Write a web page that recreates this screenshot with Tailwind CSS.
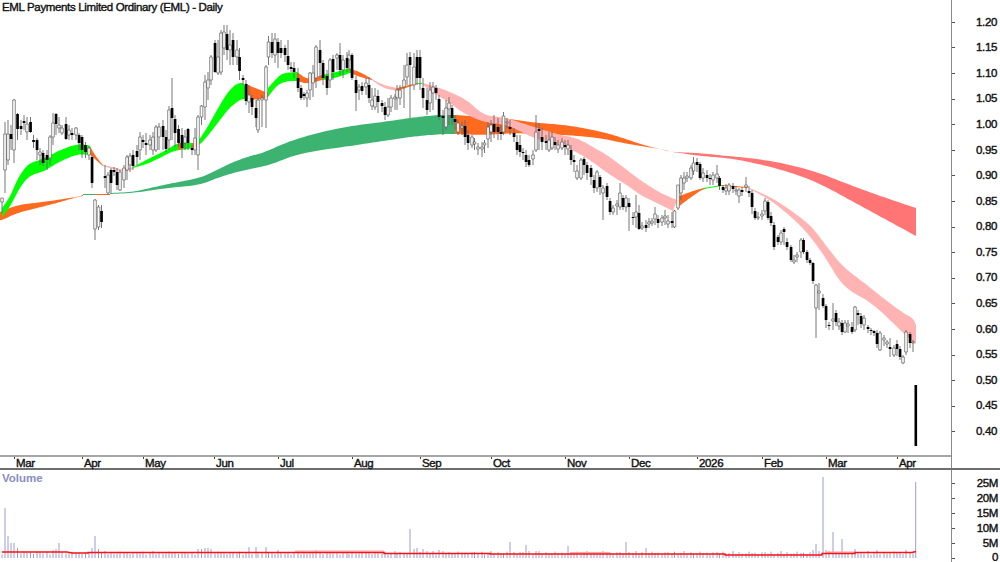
<!DOCTYPE html>
<html>
<head>
<meta charset="utf-8">
<script src="https://cdn.jsdelivr.net/npm/@tailwindcss/browser@4"></script>
</head>
<body class="w-[1000px] h-[562px] overflow-hidden bg-white text-[#111] font-['Liberation_Sans',Arial,sans-serif] text-[11.5px] tracking-[-0.35px] leading-none">
<div class="flex flex-col h-[562px]">
  <!-- price pane -->
  <div class="flex h-[455px]">
    <div class="relative w-[951px]">
      <svg id="main" class="block blur-[0.2px]" width="951" height="455" viewBox="0 0 951 455">
        <polygon class="band" fill="#ff6a1f" points="0,212 17,205 43,202 77,197 83,195 83,196 77,197 57,203 33,209 17,213 2,220 0,220"/>
        <polygon fill="#3cb371" points="83,194 95,194 95,195 83,195"/>
        <polygon fill="#ff6a1f" points="95,194 110,194 110,195 95,195"/>
        <polygon class="band" fill="#3cb371" points="110,193 133,192 150,188 173,183 200,178 217,170 233,162 250,156 263,153 287,142 317,133 350,126 383,122 417,117 437,115 455,115 455,134 443,134 417,136 383,141 350,146 300,153 270,165 250,169 233,173 217,178 200,185 167,188 133,193 110,194"/>
        <polygon class="band" fill="#ff6a1f" points="455,115 500,118 510,119 537,123 567,125 603,132 623,138 643,145 660,149 647,147 623,143 600,138 567,135 517,133 500,134 480,135 455,134"/>
        <polygon class="band" fill="#ff7575" points="660,149 670,152 700,153 727,156 750,158 783,163 817,172 850,185 883,197 916,208 916,236 883,218 850,200 817,182 783,170 750,162 727,158 700,156 673,152"/>

        <polygon class="band" fill="#00ff00" points="2,208 10,197 17,180 24,169 30,163 43,159 60,150 77,144 88,145 90,146 90,155 80,154 70,157 57,163 43,172 30,175 20,187 10,207 2,217"/>
        <polygon class="band" fill="#ff6a1f" points="90,146 92,150 97,158 103,165 103,166 97,161 92,156 90,155"/>
        <polygon class="band" fill="#ffb3b3" points="103,165 113,167 123,170 133,167 133,169 123,172 113,169 103,166"/>
        <polygon class="band" fill="#00ff00" points="133,167 150,158 167,150 177,143 190,143 197,143 207,128 217,110 227,93 237,83 245,83 248,98 240,100 230,107 220,120 210,133 200,145 190,149 177,150 167,154 150,163 133,168"/>
        <polygon fill="#ff6a1f" points="178,143 183,143 183,149 178,150"/>
        <polygon fill="#ff6a1f" points="192,143 197,143 197,146 192,149"/>
        <polygon class="band" fill="#ff6a1f" points="245,83 250,86 258,89 265,92 268,92 268,97 265,99 250,100 248,98"/>
        <polygon class="band" fill="#00ff00" points="268,88 277,78 283,73 297,72 297,81 287,81 277,85 268,97"/>
        <polygon class="band" fill="#ff6a1f" points="297,72 308,80 322,75 322,80 308,84 297,81"/>
        <polygon class="band" fill="#00ff00" points="322,75 332,73 350,68 350,73 332,79 322,80"/>
        <polygon class="band" fill="#ff6a1f" points="350,69 360,72 372,79 372,80 360,77 350,73"/>
        <polygon class="band" fill="#ffb3b3" points="372,79 383,85 397,88 397,91 383,88 372,80"/>
        <polygon fill="#ff6a1f" points="397,88 417,83 417,84 397,91"/>
        <polygon fill="#00ff00" points="417,83 422,83 422,84 417,84"/>
        <polygon class="band" fill="#ffb3b3" points="423,83 437,87 450,92 467,100 483,115 500,117 510,119 537,128 560,135 577,138 593,147 607,155 623,167 640,180 660,193 677,200 673,211 657,203 640,195 627,185 610,175 590,160 573,150 553,143 533,138 510,126 500,124 483,122 463,113 450,103 432,92 423,85"/>
        <polygon class="band" fill="#ff6a1f" points="677,197 690,192 703,188 707,188 700,191 687,200 677,208"/>
        <polygon fill="#00ff00" points="703,188 722,185 722,186 703,189"/>
        <polygon fill="#ff6a1f" points="722,185 748,187 748,188 722,186"/>
        <polygon class="band" fill="#ffb3b3" points="750,188 770,197 783,205 800,217 813,228 827,247 843,267 863,282 883,298 903,313 913,318 916,325 916,344 913,342 900,330 883,313 867,300 853,293 840,282 827,260 813,240 800,225 783,210 770,200 750,189"/>

        <path id="wicks" fill="none" stroke="#666" stroke-width="0.9"/>
        <path id="hollow" fill="#fff" stroke="#5c5c5c" stroke-width="0.7"/>
        <path id="solid" fill="#000"/>
        <rect x="914.5" y="385" width="2.6" height="61" fill="#000"/>
      </svg>
      <div class="absolute left-[2px] top-[2px] [-webkit-text-stroke:0.4px_#111]">EML Payments Limited Ordinary (EML) - Daily</div>
    </div>
    <div class="w-[49px] border-l border-[#8a8a8a] pt-[9.5px] [-webkit-text-stroke:0.4px_#111]">
      <div class="flex justify-between items-center h-[25.6px] pr-[3px]"><span class="w-[3px] h-px bg-[#555]"></span><span>1.20</span></div>
      <div class="flex justify-between items-center h-[25.6px] pr-[3px]"><span class="w-[3px] h-px bg-[#555]"></span><span>1.15</span></div>
      <div class="flex justify-between items-center h-[25.6px] pr-[3px]"><span class="w-[3px] h-px bg-[#555]"></span><span>1.10</span></div>
      <div class="flex justify-between items-center h-[25.6px] pr-[3px]"><span class="w-[3px] h-px bg-[#555]"></span><span>1.05</span></div>
      <div class="flex justify-between items-center h-[25.6px] pr-[3px]"><span class="w-[3px] h-px bg-[#555]"></span><span>1.00</span></div>
      <div class="flex justify-between items-center h-[25.6px] pr-[3px]"><span class="w-[3px] h-px bg-[#555]"></span><span>0.95</span></div>
      <div class="flex justify-between items-center h-[25.6px] pr-[3px]"><span class="w-[3px] h-px bg-[#555]"></span><span>0.90</span></div>
      <div class="flex justify-between items-center h-[25.6px] pr-[3px]"><span class="w-[3px] h-px bg-[#555]"></span><span>0.85</span></div>
      <div class="flex justify-between items-center h-[25.6px] pr-[3px]"><span class="w-[3px] h-px bg-[#555]"></span><span>0.80</span></div>
      <div class="flex justify-between items-center h-[25.6px] pr-[3px]"><span class="w-[3px] h-px bg-[#555]"></span><span>0.75</span></div>
      <div class="flex justify-between items-center h-[25.6px] pr-[3px]"><span class="w-[3px] h-px bg-[#555]"></span><span>0.70</span></div>
      <div class="flex justify-between items-center h-[25.6px] pr-[3px]"><span class="w-[3px] h-px bg-[#555]"></span><span>0.65</span></div>
      <div class="flex justify-between items-center h-[25.6px] pr-[3px]"><span class="w-[3px] h-px bg-[#555]"></span><span>0.60</span></div>
      <div class="flex justify-between items-center h-[25.6px] pr-[3px]"><span class="w-[3px] h-px bg-[#555]"></span><span>0.55</span></div>
      <div class="flex justify-between items-center h-[25.6px] pr-[3px]"><span class="w-[3px] h-px bg-[#555]"></span><span>0.50</span></div>
      <div class="flex justify-between items-center h-[25.6px] pr-[3px]"><span class="w-[3px] h-px bg-[#555]"></span><span>0.45</span></div>
      <div class="flex justify-between items-center h-[25.6px] pr-[3px]"><span class="w-[3px] h-px bg-[#555]"></span><span>0.40</span></div>
    </div>
  </div>
  <!-- date strip -->
  <div class="flex h-[15px] border-b-2 border-[#6e6e6e]">
    <div class="relative flex w-[951px] pl-[14px] border-t-2 border-[#a6a6a6] [-webkit-text-stroke:0.4px_#111]">
      <div class="relative w-[68px] pl-[2px] pt-px"><span class="absolute left-0 top-0 w-px h-[2px] bg-[#444]"></span>Mar</div>
      <div class="relative w-[61px] pl-[2px] pt-px"><span class="absolute left-0 top-0 w-px h-[2px] bg-[#444]"></span>Apr</div>
      <div class="relative w-[71px] pl-[2px] pt-px"><span class="absolute left-0 top-0 w-px h-[2px] bg-[#444]"></span>May</div>
      <div class="relative w-[64px] pl-[2px] pt-px"><span class="absolute left-0 top-0 w-px h-[2px] bg-[#444]"></span>Jun</div>
      <div class="relative w-[74px] pl-[2px] pt-px"><span class="absolute left-0 top-0 w-px h-[2px] bg-[#444]"></span>Jul</div>
      <div class="relative w-[68px] pl-[2px] pt-px"><span class="absolute left-0 top-0 w-px h-[2px] bg-[#444]"></span>Aug</div>
      <div class="relative w-[71px] pl-[2px] pt-px"><span class="absolute left-0 top-0 w-px h-[2px] bg-[#444]"></span>Sep</div>
      <div class="relative w-[74px] pl-[2px] pt-px"><span class="absolute left-0 top-0 w-px h-[2px] bg-[#444]"></span>Oct</div>
      <div class="relative w-[64px] pl-[2px] pt-px"><span class="absolute left-0 top-0 w-px h-[2px] bg-[#444]"></span>Nov</div>
      <div class="relative w-[68px] pl-[2px] pt-px"><span class="absolute left-0 top-0 w-px h-[2px] bg-[#444]"></span>Dec</div>
      <div class="relative w-[65px] pl-[2px] pt-px"><span class="absolute left-0 top-0 w-px h-[2px] bg-[#444]"></span>2026</div>
      <div class="relative w-[64px] pl-[2px] pt-px"><span class="absolute left-0 top-0 w-px h-[2px] bg-[#444]"></span>Feb</div>
      <div class="relative w-[71px] pl-[2px] pt-px"><span class="absolute left-0 top-0 w-px h-[2px] bg-[#444]"></span>Mar</div>
      <div class="relative w-[40px] pl-[2px] pt-px"><span class="absolute left-0 top-0 w-px h-[2px] bg-[#444]"></span>Apr</div>
    </div>
    <div class="w-[49px] border-l border-[#8a8a8a]"></div>
  </div>
  <!-- volume pane -->
  <div class="flex flex-1 min-h-0">
    <div class="relative w-[951px]">
      <svg class="block blur-[0.2px]" width="951" height="92" viewBox="0 470 951 92">
        <path id="vol" fill="none" stroke="#9a9ad8" stroke-width="1"/>
        <path fill="none" stroke="#ffa8a8" stroke-width="1.2" d="M295 551.2H384M570 552.6H610M826 552.2H855"/>
        <path fill="none" stroke="#ff1010" stroke-width="1.4" d="M2 552H67L72 553H88V552.5H384V553.5H490V554H725V555H822V553.5H855V552.5H912L916 551.5"/>
      </svg>
      <div class="absolute left-[2px] top-[3px] font-bold text-[#8b8bc6] tracking-normal">Volume</div>
    </div>
    <div class="w-[49px] border-l border-[#8a8a8a] pt-[6px] [-webkit-text-stroke:0.4px_#111]">
      <div class="flex justify-between items-center h-[15px] pr-[2px]"><span class="w-[3px] h-px bg-[#555]"></span><span>25M</span></div>
      <div class="flex justify-between items-center h-[15px] pr-[2px]"><span class="w-[3px] h-px bg-[#555]"></span><span>20M</span></div>
      <div class="flex justify-between items-center h-[15px] pr-[2px]"><span class="w-[3px] h-px bg-[#555]"></span><span>15M</span></div>
      <div class="flex justify-between items-center h-[15px] pr-[2px]"><span class="w-[3px] h-px bg-[#555]"></span><span>10M</span></div>
      <div class="flex justify-between items-center h-[15px] pr-[2px]"><span class="w-[3px] h-px bg-[#555]"></span><span>5M</span></div>
      <div class="flex justify-between items-center h-[14px] pr-[2px]"><span class="w-[3px] h-px bg-[#555]"></span><span>0</span></div>
    </div>
  </div>
</div>
<script>
// Smooth the moving-average ribbons: top edge runs left to right, bottom edge back
function chaikin(p){
  for(var n=0;n<3;n++){
    var q=[p[0]];
    for(var i=0;i<p.length-1;i++){
      q.push([p[i][0]*.75+p[i+1][0]*.25,p[i][1]*.75+p[i+1][1]*.25]);
      q.push([p[i][0]*.25+p[i+1][0]*.75,p[i][1]*.25+p[i+1][1]*.75]);
    }
    q.push(p[p.length-1]);
    p=q;
  }
  return p;
}
document.querySelectorAll('polygon.band').forEach(function(g){
  var p=g.getAttribute('points').trim().split(' ').map(function(a){return a.split(',').map(Number);});
  var k=0;
  while(k<p.length-1&&p[k+1][0]>p[k][0])k++;
  var out=chaikin(p.slice(0,k+1)).concat(chaikin(p.slice(k+1)));
  g.setAttribute('points',out.map(function(a){return a[0].toFixed(1)+','+a[1].toFixed(1);}).join(' '));
});
// x, high, bodyTop, bodyBottom, low, filled
var C=[
[2,198,198,202,213,0],[5,122,134,170,193,0],[8,120,134,160,165,0],[11,125,134,139,150,1],[14,99,100,150,163,0],[17.5,113,114,129,140,1],[21,120,126,129,135,1],[24,115,121,123,130,1],[27,117,124,132,140,0],[30.5,117,122,132,133,1],[33.5,135,140,142,148,1],[37,138,140,150,160,1],[40,148,152,155,165,0],[43,150,153,163,166,1],[47,150,155,160,170,1],[50,135,137,158,165,0],[53,113,123,137,145,0],[56,113,114,124,135,1],[59,117,125,128,133,0],[62,125,128,133,135,0],[66,117,124,139,140,1],[69,125,130,135,140,0],[72,128,133,135,140,1],[76,127,128,135,140,0],[79,133,135,143,150,1],[82,135,137,150,158,1],[85.5,142,145,152,158,1],[89,147,148,155,160,0],[92,155,157,183,188,1],[95,199,200,229,240,0],[98.5,205,207,227,230,0],[101.5,205,211,222,228,1],[105,165,176,178,188,1],[108,172,175,193,195,0],[111,168,170,183,193,1],[114,167,170,172,176,1],[117,168,172,185,190,1],[120,170,172,190,191,0],[124,165,168,180,188,0],[127,155,157,170,180,0],[130,153,156,165,172,0],[133,150,155,166,170,1],[137,145,151,157,165,1],[140,132,137,150,160,0],[143,135,140,142,148,1],[146,133,143,145,155,1],[150,135,140,145,150,0],[153,132,137,150,155,0],[156,125,127,150,152,0],[159,123,127,137,150,0],[163,120,126,137,150,1],[166,130,137,149,152,1],[169,106,110,140,150,0],[172,78,108,118,140,1],[175,115,119,133,147,1],[178.5,125,129,143,147,1],[182,128,135,148,158,1],[185,130,137,143,150,0],[188,128,129,143,150,1],[192,145,148,150,155,1],[195,128,138,150,155,0],[198,115,117,155,170,0],[201.5,105,106,117,125,0],[205,75,82,107,120,0],[208,72,80,88,100,0],[211,55,57,80,85,0],[215,40,43,72,73,1],[218,40,57,73,75,0],[221,30,33,72,75,0],[224,25,32,48,55,0],[227,25,34,50,60,1],[230,30,45,50,65,0],[233,33,40,57,65,1],[237,40,50,57,65,0],[239.5,48,57,71,80,1],[243,75,78,80,85,1],[246,80,84,101,105,1],[249,85,95,102,113,0],
[252,95,98,107,115,1],[256,100,108,118,127,1],[258,98,100,130,133,0],[262,95,98,100,127,0],[266,65,67,100,128,0],[268.5,36,42,57,65,0],[272,33,42,53,58,1],[275,33,39,55,63,0],[278,38,42,53,68,1],[281,40,48,53,58,1],[285,45,48,55,62,1],[288,40,56,65,70,1],[291,62,67,69,72,1],[294,62,68,72,78,1],[298,68,78,88,92,1],[301,85,88,98,100,1],[304,92,94,96,100,1],[307,90,93,98,107,0],[310,72,73,90,100,0],[313,65,73,83,97,0],[316,45,47,78,88,0],[320,40,50,63,77,1],[323,60,63,78,85,1],[327,70,76,88,95,1],[330,58,60,80,88,0],[333,55,59,72,80,1],[337,53,55,58,70,0],[340,43,55,70,75,1],[343,55,60,70,78,0],[347,52,58,68,72,1],[349,50,55,60,70,0],[352,53,55,78,80,1],[356,76,80,93,111,1],[359,84,87,90,100,0],[362,82,86,91,95,1],[366,78,83,87,95,0],[369,77,85,98,103,1],[372,88,100,106,110,0],[375,88,96,107,110,0],[378,90,96,102,113,1],[382,100,103,106,112,1],[385,102,107,115,120,1],[388,98,107,115,117,0],[391,95,98,107,112,0],[395,94,97,99,110,0],[397,85,90,98,110,0],[400,85,90,98,105,0],[404,65,80,87,108,0],[407,53,65,77,85,0],[410,52,57,65,118,1],[414,53,67,85,90,0],[417,50,57,78,85,1],[420,50,57,78,90,1],[423,78,88,98,108,1],[427,88,100,110,115,1],[430,82,90,103,112,0],[433,82,87,93,110,0],[436,85,88,93,100,1],[439,95,99,117,120,1],[443,110,116,118,135,1],[446,100,108,127,130,0],[449,97,103,109,125,0],[452,105,108,118,125,1],[455,115,119,122,130,1],[458,120,123,132,135,0],[462,122,126,128,135,0],[465,120,126,137,145,1],[468,130,135,143,150,1],[472,135,137,145,148,0],[474.5,138,142,144,150,0],[478,143,147,149,155,0],[482,142,147,149,157,0],[484.5,140,143,145,153,0],[488,122,127,139,148,0],[491,120,125,132,142,0],[494,115,124,132,138,1],[498,118,127,132,140,1],
[501,125,132,134,140,1],[503.5,112,116,132,135,0],[507,118,122,123,128,0],[510,120,127,129,135,1],[514,128,133,137,142,1],[517,135,142,150,155,1],[520,135,145,152,157,1],[523,148,152,153,160,1],[526,150,155,162,167,1],[529,155,160,165,167,1],[533,150,155,159,165,0],[536,115,132,150,152,0],[539,123,129,131,150,1],[542,128,137,142,150,1],[546,135,141,143,150,1],[549,132,140,150,152,0],[552,132,137,148,150,0],[555,137,142,145,150,1],[558,140,145,149,153,0],[562,138,142,148,150,0],[565,140,145,147,155,1],[568,140,145,149,155,0],[571,145,150,160,165,1],[574,155,160,162,172,1],[577,165,171,178,180,0],[581,158,160,178,180,0],[584,157,159,165,175,1],[587,162,165,173,180,1],[591,165,168,177,185,1],[594,175,180,188,193,1],[597,170,172,188,192,0],[600,175,177,187,195,1],[603,185,188,193,220,0],[607,183,186,197,200,1],[610,198,201,212,215,1],[613,205,208,212,215,0],[617,200,204,206,215,0],[620,183,193,207,210,0],[623,195,198,207,210,1],[626,195,198,207,212,0],[629,198,203,207,231,1],[633,212,217,218,225,1],[636,195,212,217,228,0],[639,205,213,229,230,1],[642,222,226,228,230,0],[646,220,225,228,232,1],[649,218,222,224,228,0],[652,218,221,223,226,0],[655,207,214,219,225,0],[658,215,219,223,228,1],[662,215,218,222,226,0],[665,210,216,218,225,0],[668,215,221,224,228,0],[672,212,221,223,228,1],[674.5,210,211,227,228,0],[678,185,185,208,210,0],[681,175,178,193,200,0],[684,172,178,183,190,0],[687,172,176,178,182,0],[691,165,168,178,180,0],[693.5,157,163,171,175,0],[697,158,162,165,172,1],[700,162,164,178,180,1],[703,168,173,178,182,0],[707,170,175,178,182,1],[710,174,178,179,185,1],[713,172,175,180,185,0],[717,165,174,178,183,0],[719.5,176,178,186,190,1],[723,185,187,190,193,1],[726,184,188,191,195,0],[729,183,185,191,195,0],[733,183,186,189,193,1],[736,186,190,191,195,0],[739,188,190,196,203,0],[742,187,190,192,196,1],[746,177,185,187,192,0],[749,186,191,193,197,1],
[752,190,193,207,214,1],[755,208,211,218,220,1],[758,212,217,218,220,0],[762,210,214,216,220,0],[765,198,201,211,215,0],[768,200,202,218,220,1],[771,212,216,223,226,1],[774,222,225,247,250,1],[778,235,237,242,245,1],[781,230,233,242,245,0],[784,227,229,232,245,1],[787,238,242,247,250,1],[791,245,247,260,262,1],[794,255,260,262,264,0],[797,252,255,257,262,0],[801,238,240,252,258,0],[803.5,238,240,252,254,1],[807,250,252,260,263,1],[810,258,260,263,265,1],[813,262,263,281,284,1],[816,284,285,308,338,0],[819,283,291,293,310,0],[823,294,298,306,308,1],[826,304,306,320,328,1],[829,322,325,326,330,1],[833,303,319,321,330,0],[836,310,313,322,326,1],[839,318,322,326,330,0],[842,320,323,332,335,1],[845,320,323,332,333,0],[848,320,324,326,333,0],[852,322,327,332,334,1],[855,306,307,330,332,0],[858,310,313,315,325,1],[861,313,316,324,328,1],[864,315,318,325,330,0],[868,325,327,329,333,1],[871,328,330,331,335,1],[874,330,331,333,336,1],[877,330,333,344,348,1],[880,331,333,350,351,0],[884,335,338,340,346,0],[887,340,342,344,348,0],[890,338,347,349,357,1],[894,345,348,355,357,0],[897,340,344,349,356,1],[900,346,349,357,360,1],[903,355,357,363,364,0],[906,330,332,352,355,0],[910,332,334,343,348,1],[913,340,342,343,352,0]];
var w='',h='',s='';
C.forEach(function(c){
  w+='M'+c[0]+' '+c[1]+'V'+c[4];
  if(c[5]) s+='M'+(c[0]-1.3)+' '+c[2]+'h2.7V'+c[3]+'h-2.7z';
  else h+='M'+(c[0]-1.3)+' '+c[2]+'h2.6V'+c[3]+'h-2.6z';
});
document.getElementById('wicks').setAttribute('d',w);
document.getElementById('hollow').setAttribute('d',h);
document.getElementById('solid').setAttribute('d',s);
var spikes={5:508,8:536,11:543,14:543,17:548,60:543,56:549,53:550,92:548,95:536,98:549,198:549,201:549,205:548,208:548,211:549,256:547,250:547,266:547,278:550,317:550,411:529,414:549,417:548,420:552,424:549,427:551,433:551,439:550,510:542,514:552,520:552,526:545,529:551,536:551,568:546,571:552,604:551,627:542,630:552,646:548,813:550,816:544,819:551,823:477,826:550,833:532,842:539,855:549,868:551,877:550,907:550};
var v='';
C.forEach(function(c,i){
  var x=Math.round(c[0]);
  var t=spikes[x]||spikes[x+1]||spikes[x-1];
  if(!t) t=554.5-((i*7)%5)*0.6-((i*13)%3)*0.5;
  v+='M'+c[0]+' '+t+'V558';
});
v+='M915.7 482V558';
document.getElementById('vol').setAttribute('d',v);
</script>
</body>
</html>
